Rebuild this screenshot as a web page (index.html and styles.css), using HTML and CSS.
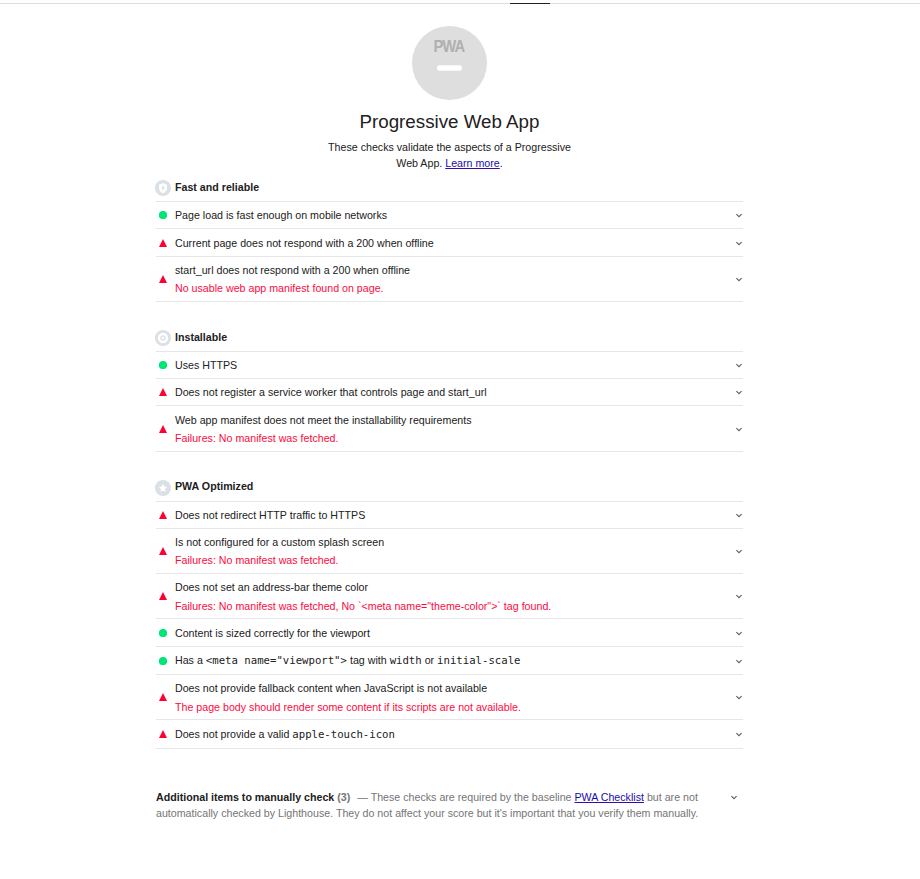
FILE: index.html
```html
<!DOCTYPE html>
<html lang="en">
<head>
<meta charset="utf-8">
<title>Progressive Web App</title>
<link rel="stylesheet" href="styles.css">
</head>
<body>
<svg class="defs" aria-hidden="true">
  <symbol id="chevron" viewBox="0 0 8 8"><path d="M1.4 3.1 L4 5.7 L6.6 3.1" fill="none" stroke="#616161" stroke-width="1.15"/></symbol>
  <symbol id="pass" viewBox="0 0 8 8"><circle cx="4" cy="4" r="4.1" fill="#00e676"/></symbol>
  <symbol id="fail" viewBox="0 0 8 8"><path d="M4 0 L8 8 H0 Z" fill="#ff0033"/></symbol>
</svg>
<div class="topbar"><span class="topbar-mark"></span></div>
<main class="report">
  <header class="header">
    <svg class="gauge" viewBox="0 0 75 74">
      <ellipse cx="37.5" cy="37" rx="37.5" ry="37" fill="#dedede"/>
      <text class="gauge-label" x="21.4" y="26" textLength="31" lengthAdjust="spacingAndGlyphs">PWA</text>
      <rect x="25" y="39.3" width="25" height="5.4" rx="2.6" fill="#fff"/>
    </svg>
    <h1>Progressive Web App</h1>
    <p class="intro">These checks validate the aspects of a Progressive Web App. <a href="#">Learn more</a>.</p>
  </header>

  <section class="group">
    <h2><svg class="badge" viewBox="0 0 16 16"><circle cx="8" cy="8" r="8" fill="#dae0e3"/><path d="M8 3 L12 4.8 V8 C12 10.6 10.3 12.6 8 13.2 C5.7 12.6 4 10.6 4 8 V4.8 Z" fill="#fff"/><path d="M8.6 4.8 L6.2 8.6 H7.6 V11.3 L9.9 7.5 H8.6 Z" fill="#dae0e3"/></svg><span>Fast and reliable</span></h2>
    <ul class="audits audits-fast">
      <li><svg class="mark"><use href="#pass"/></svg><div class="text"><p>Page load is fast enough on mobile networks</p></div><svg class="chev"><use href="#chevron"/></svg></li>
      <li><svg class="mark"><use href="#fail"/></svg><div class="text"><p>Current page does not respond with a 200 when offline</p></div><svg class="chev"><use href="#chevron"/></svg></li>
      <li><svg class="mark"><use href="#fail"/></svg><div class="text"><p>start_url does not respond with a 200 when offline</p><p class="error">No usable web app manifest found on page.</p></div><svg class="chev"><use href="#chevron"/></svg></li>
    </ul>
  </section>

  <section class="group">
    <h2><svg class="badge" viewBox="0 0 16 16"><circle cx="8" cy="8" r="8" fill="#dae0e3"/><circle cx="8" cy="8" r="5.2" fill="#fff"/><circle cx="8" cy="8" r="2.7" fill="#dae0e3"/><path d="M8 6.4 V9.6 M6.4 8 H9.6" stroke="#fff" stroke-width="1"/></svg><span>Installable</span></h2>
    <ul class="audits audits-install">
      <li><svg class="mark"><use href="#pass"/></svg><div class="text"><p>Uses HTTPS</p></div><svg class="chev"><use href="#chevron"/></svg></li>
      <li><svg class="mark"><use href="#fail"/></svg><div class="text"><p>Does not register a service worker that controls page and start_url</p></div><svg class="chev"><use href="#chevron"/></svg></li>
      <li><svg class="mark"><use href="#fail"/></svg><div class="text"><p>Web app manifest does not meet the installability requirements</p><p class="error">Failures: No manifest was fetched.</p></div><svg class="chev"><use href="#chevron"/></svg></li>
    </ul>
  </section>

  <section class="group">
    <h2 class="raised"><svg class="badge" viewBox="0 0 16 16"><circle cx="8" cy="8" r="8" fill="#dae0e3"/><path d="M8 3.6 L9.2 6.5 L12.3 6.8 L10 8.9 L10.7 12 L8 10.4 L5.3 12 L6 8.9 L3.7 6.8 L6.8 6.5 Z" fill="#fff"/></svg><span>PWA Optimized</span></h2>
    <ul class="audits audits-optimized">
      <li><svg class="mark"><use href="#fail"/></svg><div class="text"><p>Does not redirect HTTP traffic to HTTPS</p></div><svg class="chev"><use href="#chevron"/></svg></li>
      <li><svg class="mark"><use href="#fail"/></svg><div class="text"><p>Is not configured for a custom splash screen</p><p class="error">Failures: No manifest was fetched.</p></div><svg class="chev"><use href="#chevron"/></svg></li>
      <li><svg class="mark"><use href="#fail"/></svg><div class="text loose"><p>Does not set an address-bar theme color</p><p class="error">Failures: No manifest was fetched, No `&lt;meta name="theme-color"&gt;` tag found.</p></div><svg class="chev"><use href="#chevron"/></svg></li>
      <li><svg class="mark"><use href="#pass"/></svg><div class="text"><p>Content is sized correctly for the viewport</p></div><svg class="chev"><use href="#chevron"/></svg></li>
      <li><svg class="mark"><use href="#pass"/></svg><div class="text lifted"><p>Has a <code>&lt;meta name="viewport"&gt;</code> tag with <code>width</code> or <code>initial-scale</code></p></div><svg class="chev"><use href="#chevron"/></svg></li>
      <li><svg class="mark"><use href="#fail"/></svg><div class="text loose"><p>Does not provide fallback content when JavaScript is not available</p><p class="error">The page body should render some content if its scripts are not available.</p></div><svg class="chev"><use href="#chevron"/></svg></li>
      <li><svg class="mark"><use href="#fail"/></svg><div class="text"><p>Does not provide a valid <code>apple-touch-icon</code></p></div><svg class="chev"><use href="#chevron"/></svg></li>
    </ul>
  </section>

  <section class="manual">
    <p><b>Additional items to manually check</b> <b class="count">(3)</b><span class="dash">— These checks are required by the baseline <a href="#">PWA Checklist</a> but are not</span><br>automatically checked by Lighthouse. They do not affect your score but it's important that you verify them manually.</p>
    <svg class="chev"><use href="#chevron"/></svg>
  </section>
</main>
</body>
</html>
```
FILE: styles.css
```css
* { box-sizing: border-box; }
body {
  margin: 0;
  background: #fff;
  color: #212121;
  font: 10.67px/18px "Liberation Sans", Arial, sans-serif;
}
h1, h2, p, ul { margin: 0; padding: 0; font-weight: normal; }
ul { list-style: none; }
svg { display: block; flex: none; }
a { color: #1a0dab; text-decoration-color: #3a0ca3; }
.defs { display: none; }
.topbar { height: 4px; padding: 3px 0 0 510px; background: linear-gradient(#fff 3px, #dedede 3px); }
.topbar-mark { display: block; width: 40px; height: 1px; background: #212121; }
.report { width: 587px; margin-left: 156px; }
.header { display: flex; flex-direction: column; align-items: center; height: 174px; padding-top: 22px; }
.gauge { width: 75px; height: 74px; }
.gauge-label { font: bold 16.5px "Liberation Sans", sans-serif; letter-spacing: -1px; fill: #b0b0b0; }
h1 { margin-top: 10px; font-size: 18.75px; line-height: 24px; }
.intro { width: 260px; margin-top: 5px; line-height: 16px; text-align: center; }
.group { height: 150px; }
.group:nth-of-type(3) { height: 297px; }
h2 { display: flex; align-items: center; gap: 4px; height: 23px; margin-left: -1px; padding-bottom: 4px; font-size: 10.67px; font-weight: bold; }
.badge { width: 16px; height: 16px; margin-top: 1px; }
h2 span { margin-top: -2px; }
.raised span { margin-top: -4px; }
.audits { display: grid; border-top: 1px solid #e6e6e6; }
.audits-fast { grid-template-rows: 27px 28px 45px; }
.audits-install { grid-template-rows: 27px 27px 46px; }
.audits-optimized { grid-template-rows: 27px 45px 45px 28px 28px 45px 29px; }
.audits li { display: flex; align-items: center; border-bottom: 1px solid #e6e6e6; }
.mark { width: 8px; height: 8px; margin: 0 8px 0 3px; }
.text { flex: 1; }
.loose { padding-top: 1px; line-height: 19px; }
.lifted { padding-bottom: 2px; }
.error { color: #ff0a40; }
.chev { width: 8px; height: 8px; }
code { font: 10.67px "DejaVu Sans Mono", monospace; line-height: 1; }
.manual { display: flex; justify-content: space-between; margin-top: 14px; padding-right: 5px; color: #757575; line-height: 16px; }
.manual b { color: #212121; }
.manual .count { color: #757575; }
.manual .chev { margin-top: 4px; }
.dash { margin-left: 7px; }
```
